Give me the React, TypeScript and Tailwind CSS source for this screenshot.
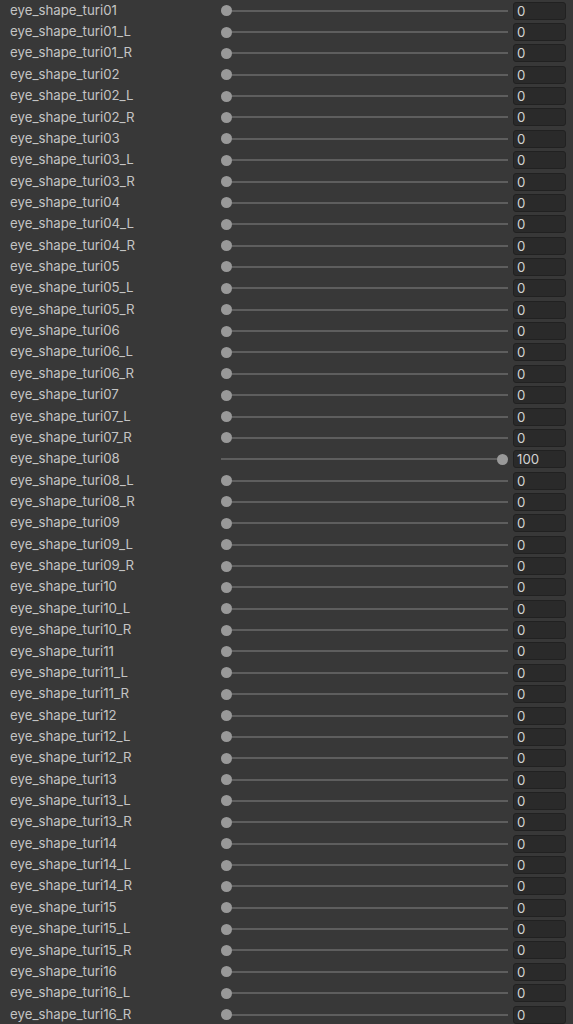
import React from 'react';

const names: string[] = [];
for (let i = 1; i <= 16; i++) {
  const n = String(i).padStart(2, '0');
  names.push(`eye_shape_turi${n}`, `eye_shape_turi${n}_L`, `eye_shape_turi${n}_R`);
}

const values: Record<string, number> = { eye_shape_turi08: 100 };

const SliderRow: React.FC<{ label: string; value: number }> = ({ label, value }) => (
  <div className="flex items-center h-[21.36px]">
    <div className="w-[221px] pl-[10px] text-[13.25px] text-[#c4c4c4] truncate">{label}</div>
    <div className="relative flex-1 h-[11px] mr-[5px]">
      <div className="absolute left-0 right-0 top-[4.5px] h-[2px] bg-[#5e5e5e]" />
      <div
        className="absolute top-0 w-[11px] h-[11px] rounded-full bg-[#999999]"
        style={{ left: `calc(${value / 100} * (100% - 11px))` }}
      />
    </div>
    <div className="w-[53px] h-[18px] mr-[7px] rounded-[3px] bg-[#2a2a2a] border border-[#212121] pl-[3px] text-[13.25px] leading-[16px] text-[#d2d2d2]">
      {value}
    </div>
  </div>
);

const App: React.FC = () => {
  return (
    <div className="w-[573px] h-[1024px] overflow-hidden bg-[#383838] font-['Inter',sans-serif]">
      {names.map((name) => (
        <SliderRow key={name} label={name} value={values[name] ?? 0} />
      ))}
    </div>
  );
};

export default App;
